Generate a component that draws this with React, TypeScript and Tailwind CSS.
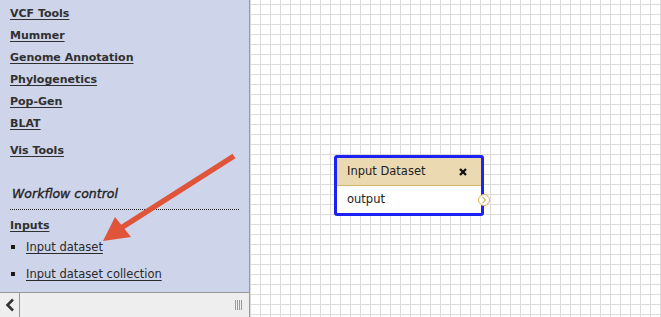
const sections = ["VCF Tools", "Mummer", "Genome Annotation", "Phylogenetics", "Pop-Gen", "BLAT"];

function SectionLink({ label, className = "" }: { label: string; className?: string }) {
  return (
    <div className={`h-[22px] leading-[22px] ${className}`}>
      <a className="cursor-pointer font-bold text-[11px] text-[#303030] underline decoration-1 underline-offset-[2px]">
        {label}
      </a>
    </div>
  );
}

function ToolItem({ label, className = "" }: { label: string; className?: string }) {
  return (
    <div className={`flex h-[22px] items-center leading-[22px] ${className}`}>
      <span className="ml-px mr-[11px] h-[4px] w-[4px] shrink-0 bg-[#1a1a1a]" />
      <a className="cursor-pointer text-[11.5px] text-[#2a2a2a] underline decoration-1 underline-offset-[2px]">
        {label}
      </a>
    </div>
  );
}

function Pointer() {
  return (
    <svg className="pointer-events-none absolute left-0 top-0" width="249" height="292" viewBox="0 0 249 292">
      <line x1="234" y1="156" x2="121" y2="228" stroke="#e0553a" strokeWidth="5.5" strokeLinecap="butt" />
      <polygon points="103,241 115,217 131,237" fill="#e0553a" />
    </svg>
  );
}

function ToolPanel() {
  return (
    <aside className="relative flex w-[250px] shrink-0 flex-col border-r border-[#999] bg-[#ced4ea]">
      <div className="relative flex-1 overflow-hidden pl-[10px] pt-[1px]">
        {sections.map(s => (
          <SectionLink key={s} label={s} />
        ))}
        <SectionLink label="Vis Tools" className="mt-[5px]" />

        <div className="mr-[10px] mt-[23px] h-[21px] pl-[2px] text-[12.5px] italic leading-[21px] text-[#222] [-webkit-text-stroke:0.35px_#222]">
          Workflow control
        </div>
        <div className="mr-[10px] mt-[5px] border-t border-dotted border-[#222]" />
        <SectionLink label="Inputs" className="mt-[3px]" />
        <ToolItem label="Input dataset" className="mt-px" />
        <ToolItem label="Input dataset collection" className="mt-[5px]" />
      </div>

      <div className="flex h-[25px] shrink-0 border-t border-[#999] bg-[#eee]">
        <button className="flex w-[20px] items-center justify-center border-r border-[#999]" type="button">
          <svg width="10" height="14" viewBox="0 0 10 14">
            <path d="M8 1.5 L2.5 7 L8 12.5" fill="none" stroke="#333" strokeWidth="2.6" />
          </svg>
        </button>
        <div className="flex flex-1 items-center justify-end pr-[6px]">
          <svg width="8" height="10" viewBox="0 0 8 10">
            <path d="M0.5 0V10M2.5 0V10M4.5 0V10M6.5 0V10" stroke="#999" strokeWidth="1" />
          </svg>
        </div>
      </div>
      <Pointer />
    </aside>
  );
}

function DatasetNode() {
  return (
    <div className="absolute left-[84px] top-[155px] w-[150px] rounded-[3px] border-[3px] border-[#1c22f2] bg-white">
      <div className="flex h-[28px] items-center justify-between border-b border-[#d6b76e] bg-[#ebd9b2] pl-[10px] pr-[14px] text-[11.5px] text-[#222]">
        <span className="pt-px">Input Dataset</span>
        <svg width="8" height="8" viewBox="0 0 8 8">
          <path d="M1 1L7 7M7 1L1 7" stroke="#111" strokeWidth="2.3" />
        </svg>
      </div>
      <div className="relative flex h-[27px] items-center pl-[10px] text-[11.5px] text-[#222]">
        <span className="pt-px">output</span>
        <span className="absolute right-[-9px] top-[8px] flex h-[12px] w-[12px] items-center justify-center rounded-full border border-[#e2b35c] bg-white">
          <svg width="6" height="8" viewBox="0 0 6 8">
            <path d="M1.5 1L4.5 4L1.5 7" fill="none" stroke="#e2b35c" strokeWidth="1.1" />
          </svg>
        </span>
      </div>
    </div>
  );
}

export default function App() {
  return (
    <div className="flex h-[317px] w-[661px] overflow-hidden bg-white font-['DejaVu_Sans',sans-serif]">
      <ToolPanel />
      <main className="relative flex-1 bg-white bg-[image:linear-gradient(to_right,#dcdcdc_1px,transparent_1px),linear-gradient(to_bottom,#dcdcdc_1px,transparent_1px)] bg-[size:10px_10px] bg-[position:0_4px]">
        <DatasetNode />
      </main>
    </div>
  );
}
